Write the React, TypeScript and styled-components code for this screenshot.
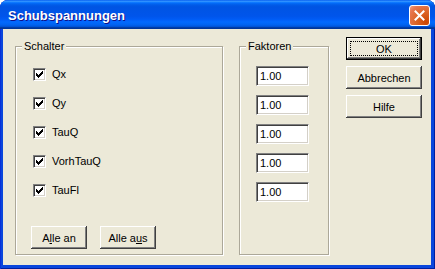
import styled, { createGlobalStyle } from 'styled-components';

const GlobalStyle = createGlobalStyle`
    html, body {
        margin: 0;
        padding: 0;
        background: #ffffff;
    }
    body {
        font-family: "Liberation Sans", Arial, sans-serif;
        font-size: 11px;
        color: #000;
    }
`;

const Frame = styled.div`
    width: 435px;
    height: 269px;
    box-sizing: border-box;
    display: flex;
    flex-direction: column;
    background: #0a46dc;
    border-radius: 8px 8px 0 0;
    overflow: hidden;
    padding: 0 4px 4px 3px;
    box-shadow: inset 1px 0 0 #0831d9, inset -1px 0 0 #001ea0, inset 0 -1px 0 #001ea0;
`;

const TitleBar = styled.div`
    height: 29px;
    flex-shrink: 0;
    margin: 0 -4px 0 -3px;
    padding: 0 5px 0 8px;
    display: flex;
    align-items: center;
    justify-content: space-between;
    background: linear-gradient(
        to bottom,
        #0058ee 0%, #3593ff 4%, #288eff 6%, #127dff 8%, #036ffc 10%,
        #0262ee 14%, #0057e5 20%, #0054e3 24%, #0055eb 56%, #005bf5 66%,
        #026afe 76%, #0062ef 86%, #0052d6 92%, #0040ab 94%, #003092 100%
    );
`;

const Title = styled.span`
    font-family: "Liberation Sans", Arial, sans-serif;
    font-weight: bold;
    font-size: 13px;
    color: #fff;
    text-shadow: 1px 1px 0 #0f1089;
    padding-top: 2px;
`;

const CloseButton = styled.div`
    width: 21px;
    height: 21px;
    box-sizing: border-box;
    border: 1px solid #fff;
    border-radius: 3px;
    display: flex;
    align-items: center;
    justify-content: center;
    background: radial-gradient(circle at 85% 85%, #cc4600 0%, #dc6527 45%, #e77751 80%, #f1a281 100%);
    margin-top: 1px;
`;

const Client = styled.div`
    flex: 1;
    background: #ece9d8;
    display: flex;
    align-items: flex-start;
    padding: 8px 0 0 12px;
`;

const Group = styled.fieldset<{ $width: number }>`
    width: ${p => p.$width}px;
    height: 215px;
    box-sizing: border-box;
    margin: 3px 0 0 0;
    padding: 0;
    min-width: 0;
    border: 1px solid #aca899;
    box-shadow: inset 1px 1px 0 #fff, 1px 1px 0 #fff;
    display: flex;
    flex-direction: column;
`;

const Legend = styled.legend`
    margin-left: 6px;
    padding: 0 2px;
    line-height: 13px;
    background: #ece9d8;
`;

const GroupBody = styled.div<{ $top: number; $left: number }>`
    display: flex;
    flex-direction: column;
    gap: 9px;
    padding: ${p => p.$top}px 0 0 ${p => p.$left}px;
`;

const CheckRow = styled.div`
    height: 20px;
    display: flex;
    align-items: center;
    gap: 6px;
    margin-left: 1px;
`;

const CheckBox = styled.span`
    width: 13px;
    height: 13px;
    box-sizing: border-box;
    background: #fff;
    border-style: solid;
    border-width: 1px;
    border-color: #808080 #fff #fff #808080;
    box-shadow: inset 1px 1px 0 #404040, inset -1px -1px 0 #d4d0c8;
    display: flex;
    padding: 2px 0 0 2px;
`;

const ButtonRow = styled.div`
    display: flex;
    gap: 13px;
    margin-top: 17px;
    margin-left: -1px;
`;

const Button = styled.div<{ $width: number; $default?: boolean }>`
    width: ${p => p.$width}px;
    height: 23px;
    box-sizing: border-box;
    display: flex;
    align-items: center;
    justify-content: center;
    background: #ece9d8;
    position: relative;
    border: ${p => (p.$default ? '1px solid #000' : 'none')};
    box-shadow: inset -1px -1px 0 #404040, inset 1px 1px 0 #fff,
        inset -2px -2px 0 #808080, inset 2px 2px 0 #ece9d8;
    cursor: default;
    u {
        text-decoration: underline;
    }
`;

const FocusRing = styled.span`
    position: absolute;
    inset: 3px;
    border: 1px dotted #000;
`;

const Field = styled.input`
    width: 53px;
    height: 20px;
    box-sizing: border-box;
    margin: 0;
    padding: 0 0 0 3px;
    border-style: solid;
    border-width: 1px;
    border-color: #808080 #fff #fff #808080;
    box-shadow: inset 1px 1px 0 #404040, inset -1px -1px 0 #d4d0c8;
    background: #fff;
    font-family: "Liberation Sans", Arial, sans-serif;
    font-size: 11px;
    color: #000;
    outline: none;
`;

const SideButtons = styled.div`
    display: flex;
    flex-direction: column;
    gap: 6px;
    margin-left: 17px;
`;

const CheckMark = () => (
    <svg width="7" height="7" viewBox="0 0 7 7" shapeRendering="crispEdges">
        <g fill="#000">
            <rect x="0" y="2" width="1" height="3" />
            <rect x="1" y="3" width="1" height="3" />
            <rect x="2" y="4" width="1" height="3" />
            <rect x="3" y="3" width="1" height="3" />
            <rect x="4" y="2" width="1" height="3" />
            <rect x="5" y="1" width="1" height="3" />
            <rect x="6" y="0" width="1" height="3" />
        </g>
    </svg>
);

const CloseIcon = () => (
    <svg width="11" height="11" viewBox="0 0 11 11">
        <path d="M1.5 1.5 L9.5 9.5 M9.5 1.5 L1.5 9.5" stroke="#fff" strokeWidth="2" strokeLinecap="square" />
    </svg>
);

const switches = ['Qx', 'Qy', 'TauQ', 'VorhTauQ', 'TauFl'];

const App = () => {
    return (
        <>
            <GlobalStyle />
            <Frame>
                <TitleBar>
                    <Title>Schubspannungen</Title>
                    <CloseButton><CloseIcon /></CloseButton>
                </TitleBar>
                <Client>
                    <Group $width={208}>
                        <Legend>Schalter</Legend>
                        <GroupBody $top={11} $left={16}>
                            {switches.map(name => (
                                <CheckRow key={name}>
                                    <CheckBox><CheckMark /></CheckBox>
                                    <span>{name}</span>
                                </CheckRow>
                            ))}
                            <ButtonRow>
                                <Button $width={56}>A<u>l</u>le an</Button>
                                <Button $width={56}>Alle a<u>u</u>s</Button>
                            </ButtonRow>
                        </GroupBody>
                    </Group>
                    <Group $width={90} style={{ marginLeft: 16 }}>
                        <Legend>Faktoren</Legend>
                        <GroupBody $top={13} $left={16}>
                            {switches.map(name => (
                                <Field key={name} defaultValue="1.00" readOnly />
                            ))}
                        </GroupBody>
                    </Group>
                    <SideButtons>
                        <Button $width={76} $default>
                            OK
                            <FocusRing />
                        </Button>
                        <Button $width={76}>Abbrechen</Button>
                        <Button $width={76}>Hilfe</Button>
                    </SideButtons>
                </Client>
            </Frame>
        </>
    );
};

export default App;
